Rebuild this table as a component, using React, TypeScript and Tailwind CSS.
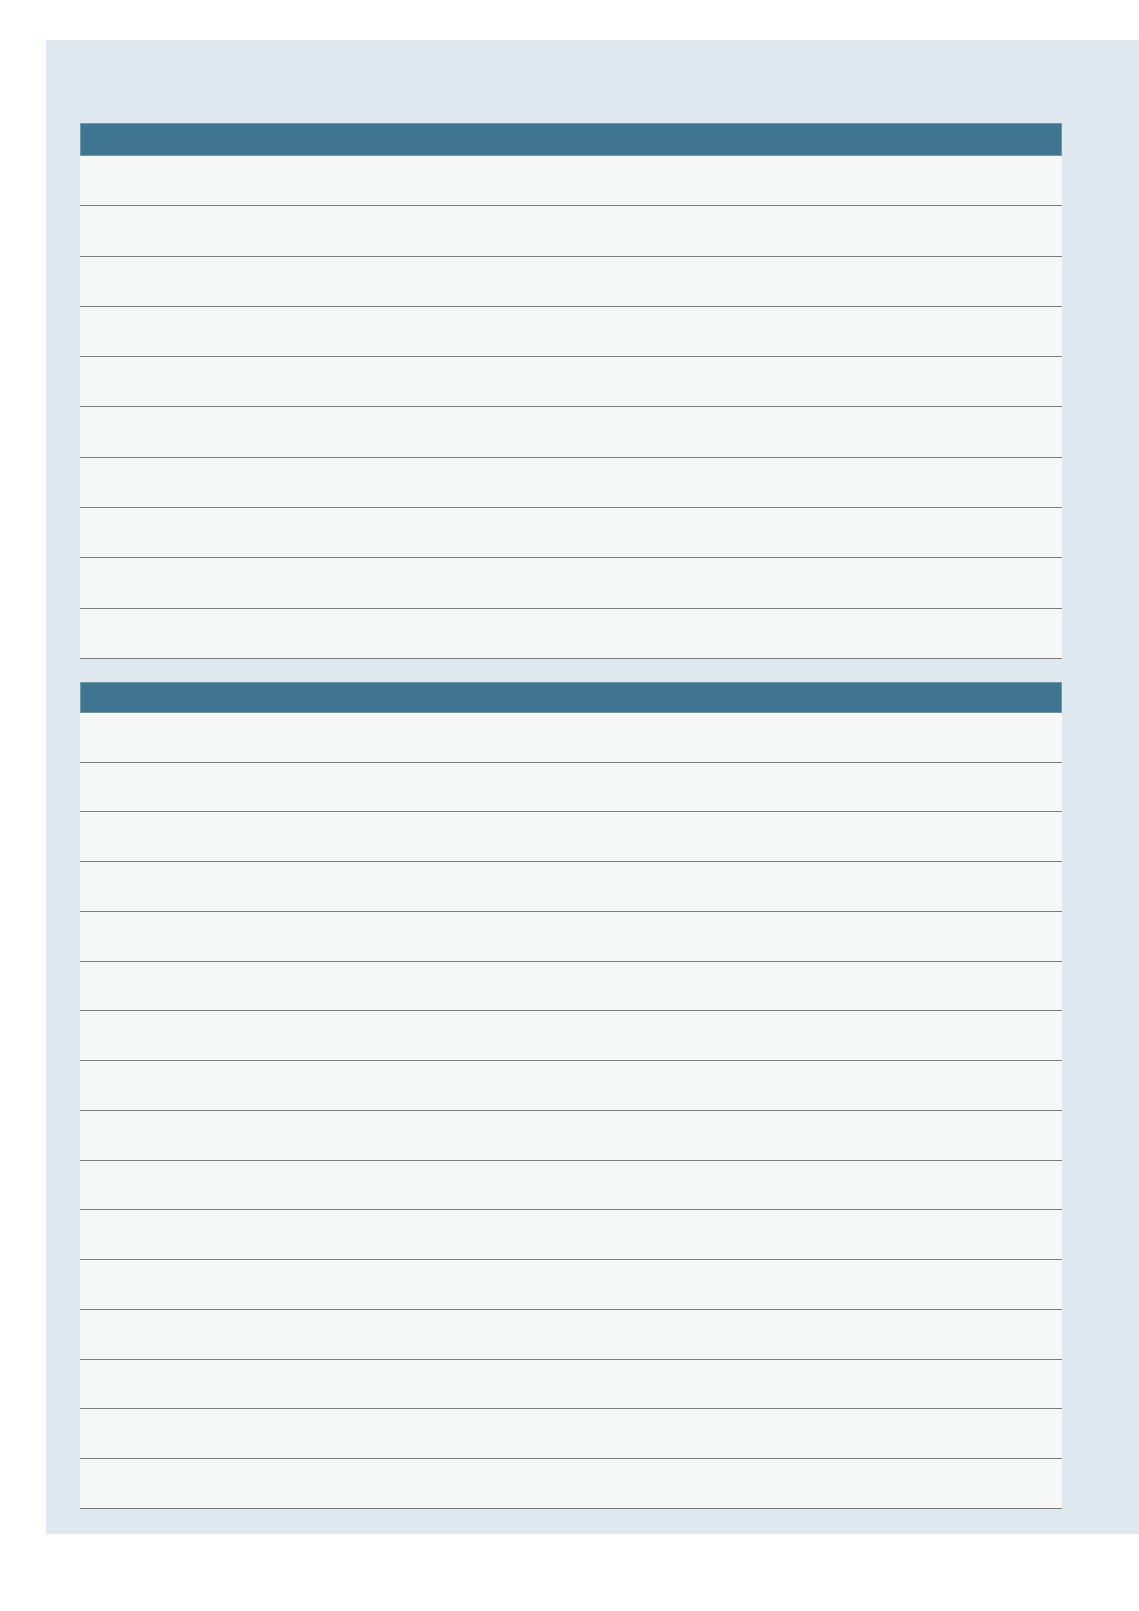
const cols = ["w-[281px]", "w-[163px]", "w-[251px]", "w-[287px]"];

const Row = ({ height }: { height: string }) => (
  <div className={`flex ${height}`}>
    {cols.map((c, i) => (
      <div key={i} className={`${c} h-full bg-[#f6f8f8] border-b border-[#7c7c7c]`} />
    ))}
  </div>
);

const Table = ({ rows, head, rowH }: { rows: number; head: string; rowH: string }) => (
  <div className="w-[982px] flex flex-col">
    <div className={`${head} bg-[#3f7590] border border-[#6f98ac]`} />
    {Array.from({ length: rows }).map((_, i) => (
      <Row key={i} height={rowH} />
    ))}
  </div>
);

const App = () => {
  return (
    <div className="bg-white min-h-[1611px] pt-[40px] pl-[46px] overflow-hidden">
      <div className="bg-[#e0e8ef] w-[1100px] h-[1494px] pt-[83px] pl-[34px] flex flex-col gap-[23px]">
        <Table rows={10} head="h-[33px]" rowH="h-[50.3px]" />
        <Table rows={16} head="h-[31px]" rowH="h-[49.75px]" />
      </div>
    </div>
  );
};

export default App;
